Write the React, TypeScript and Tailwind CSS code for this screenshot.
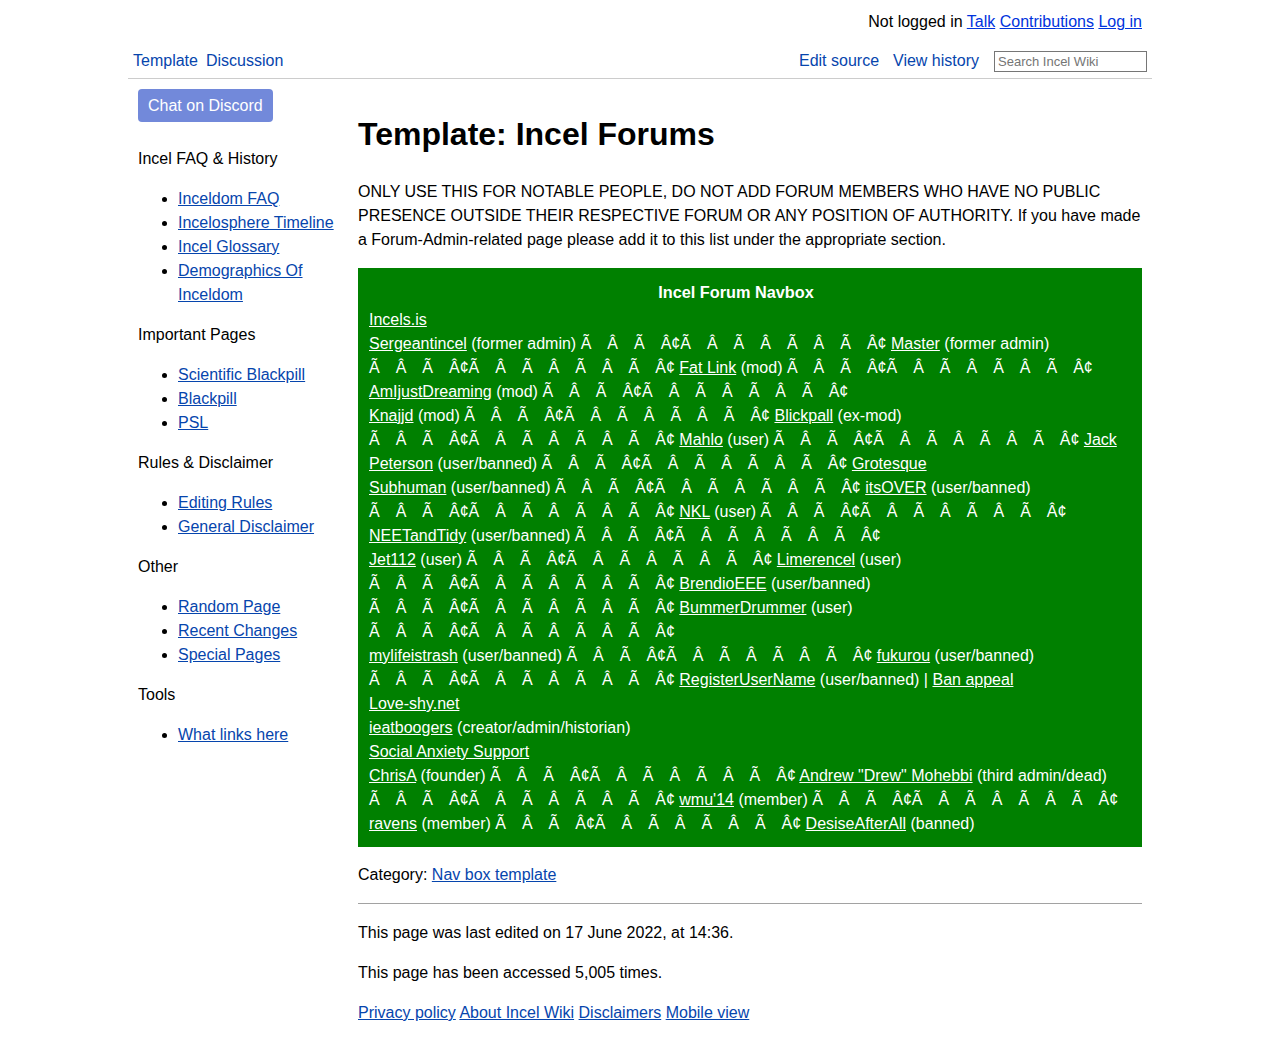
import React from "react";

const M =
  "Ã\u2003Â\u2003Ã\u2003Â¢Ã\u2003Â\u2003Ã\u2003Â\u2003Ã\u2003Â\u2003Ã\u2003Â¢";

function A({ children }: { children: React.ReactNode }) {
  return <a className="text-white underline cursor-pointer">{children}</a>;
}

function Mj() {
  return <span className="whitespace-nowrap">{M}</span>;
}

function SideLink({ children }: { children: React.ReactNode }) {
  return (
    <li>
      <a className="text-[#0645ad] underline cursor-pointer">{children}</a>
    </li>
  );
}

function SideSection({
  title,
  items,
  first,
}: {
  title: string;
  items: string[];
  first?: boolean;
}) {
  return (
    <div className={first ? "mt-[25px]" : "mt-4"}>
      <div className="leading-6">{title}</div>
      <ul className="mt-4 list-disc pl-[40px] leading-6">
        {items.map((i) => (
          <SideLink key={i}>{i}</SideLink>
        ))}
      </ul>
    </div>
  );
}

export default function App() {
  return (
    <div
      className="min-h-[1051px] bg-white text-black text-[16px]"
      style={{ fontFamily: '"Liberation Sans", Arial, sans-serif' }}
    >
      <div className="mx-auto w-[1024px]">
        {/* top personal bar */}
        <div className="pt-[10px] pr-[10px] text-right leading-6">
          Not logged in{" "}
          <a className="text-[#0033dd] underline cursor-pointer">Talk</a>{" "}
          <a className="text-[#0033dd] underline cursor-pointer">Contributions</a>{" "}
          <a className="text-[#0033dd] underline cursor-pointer">Log in</a>
        </div>
        {/* tabs */}
        <div className="mt-[15px] flex items-start justify-between border-b border-[#cccccc] pb-[5px] px-[5px]">
          <div className="flex gap-[8px] leading-6 text-[#0645ad]">
            <a className="cursor-pointer">Template</a>
            <a className="cursor-pointer">Discussion</a>
          </div>
          <div className="flex items-start leading-6 text-[#0645ad]">
            <a className="cursor-pointer">Edit source</a>
            <a className="ml-[14px] cursor-pointer">View history</a>
            <input
              className="ml-[15px] mt-[2px] h-[21px] w-[153px] border border-[#767676] px-[3px] text-[13px] leading-none text-black placeholder:text-[#757575] outline-none"
              placeholder="Search Incel Wiki"
            />
          </div>
        </div>

        <div className="flex">
          {/* sidebar */}
          <div className="w-[220px] shrink-0 pl-[10px] pr-[8px]">
            <button className="mt-[10px] h-[33px] rounded-[4px] bg-[#7289da] px-[10px] text-white leading-6">
              Chat on Discord
            </button>
            <SideSection
              first
              title="Incel FAQ & History"
              items={[
                "Inceldom FAQ",
                "Incelosphere Timeline",
                "Incel Glossary",
                "Demographics Of Inceldom",
              ]}
            />
            <SideSection
              title="Important Pages"
              items={["Scientific Blackpill", "Blackpill", "PSL"]}
            />
            <SideSection
              title="Rules & Disclaimer"
              items={["Editing Rules", "General Disclaimer"]}
            />
            <SideSection
              title="Other"
              items={["Random Page", "Recent Changes", "Special Pages"]}
            />
            <SideSection title="Tools" items={["What links here"]} />
          </div>

          {/* main */}
          <div className="w-[804px] pl-[10px] pr-[10px]">
            <h1 className="mt-[36px] text-[32px] font-bold leading-[38px]">
              Template: Incel Forums
            </h1>
            <p className="mt-[27px] leading-6">
              ONLY USE THIS FOR NOTABLE PEOPLE, DO NOT ADD FORUM MEMBERS WHO HAVE
              NO PUBLIC PRESENCE OUTSIDE THEIR RESPECTIVE FORUM OR ANY POSITION OF
              AUTHORITY. If you have made a Forum-Admin-related page please add it
              to this list under the appropriate section.
            </p>

            <div className="mt-[16px] bg-[#008000] px-[11px] pt-[12px] pb-[11px] text-white leading-6">
              <div className="mb-[4px] pr-[28px] text-center text-[16.3px] font-bold">
                Incel Forum Navbox
              </div>
              <div><A>Incels.is</A></div>
              <div>
                <A>Sergeantincel</A> (former admin) <Mj /> <A>Master</A> (former admin)
              </div>
              <div>
                <Mj /> <A>Fat Link</A> (mod) <Mj />
              </div>
              <div>
                <A>AmIjustDreaming</A> (mod) <Mj />
              </div>
              <div>
                <A>Knajjd</A> (mod) <Mj /> <A>Blickpall</A> (ex-mod)
              </div>
              <div>
                <Mj /> <A>Mahlo</A> (user) <Mj /> <A>Jack</A>
              </div>
              <div>
                <A>Peterson</A> (user/banned) <Mj /> <A>Grotesque</A>
              </div>
              <div>
                <A>Subhuman</A> (user/banned) <Mj /> <A>itsOVER</A> (user/banned)
              </div>
              <div>
                <Mj /> <A>NKL</A> (user) <Mj />
              </div>
              <div>
                <A>NEETandTidy</A> (user/banned) <Mj />
              </div>
              <div>
                <A>Jet112</A> (user) <Mj /> <A>Limerencel</A> (user)
              </div>
              <div>
                <Mj /> <A>BrendioEEE</A> (user/banned)
              </div>
              <div>
                <Mj /> <A>BummerDrummer</A> (user)
              </div>
              <div>
                <Mj />
              </div>
              <div>
                <A>mylifeistrash</A> (user/banned) <Mj /> <A>fukurou</A> (user/banned)
              </div>
              <div>
                <Mj /> <A>RegisterUserName</A> (user/banned) | <A>Ban appeal</A>
              </div>
              <div><A>Love-shy.net</A></div>
              <div>
                <A>ieatboogers</A> (creator/admin/historian)
              </div>
              <div><A>Social Anxiety Support</A></div>
              <div>
                <A>ChrisA</A> (founder) <Mj /> <A>Andrew "Drew" Mohebbi</A> (third
                admin/dead)
              </div>
              <div>
                <Mj /> <A>wmu'14</A> (member) <Mj />
              </div>
              <div>
                <A>ravens</A> (member) <Mj /> <A>DesiseAfterAll</A> (banned)
              </div>
            </div>

            <div className="mt-[16px] leading-6">
              Category:{" "}
              <a className="text-[#0645ad] underline cursor-pointer">Nav box template</a>
            </div>

            <hr className="mt-[16px] border-0 border-t border-[#a2a2a2]" />

            <div className="mt-[17px] leading-6">
              This page was last edited on 17 June 2022, at 14:36.
            </div>
            <div className="mt-[16px] leading-6">
              This page has been accessed 5,005 times.
            </div>
            <div className="mt-[16px] leading-6">
              <a className="text-[#0645ad] underline cursor-pointer">Privacy policy</a>{" "}
              <a className="text-[#0645ad] underline cursor-pointer">About Incel Wiki</a>{" "}
              <a className="text-[#0645ad] underline cursor-pointer">Disclaimers</a>{" "}
              <a className="text-[#0645ad] underline cursor-pointer">Mobile view</a>
            </div>
          </div>
        </div>
      </div>
    </div>
  );
}
